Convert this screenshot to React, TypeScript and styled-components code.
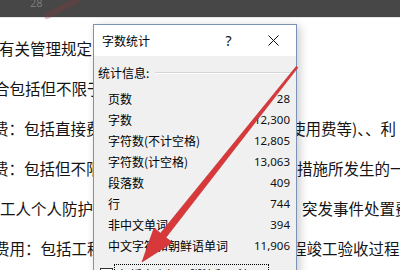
import React from 'react';
import styled, { createGlobalStyle } from 'styled-components';

const GlobalStyle = createGlobalStyle`
  html, body {
    margin: 0;
    padding: 0;
    background: #fff;
  }
  body {
    width: 400px;
    height: 270px;
    overflow: hidden;
    font-family: "Noto Sans CJK SC", "Noto Sans", sans-serif;
  }
`;

const Screen = styled.div`
  position: relative;
  width: 400px;
  height: 270px;
  overflow: hidden;
  display: flex;
  flex-direction: column;
  background: #fff;
`;

const TopBar = styled.div`
  flex: none;
  height: 17px;
  background: #474747;
  border-bottom: 1px solid #e4e4e4;
  padding-left: 30px;
  overflow: hidden;
`;

const PageNum = styled.div`
  margin-top: -3px;
  font-family: "Noto Sans", sans-serif;
  font-size: 11px;
  line-height: 11px;
  color: #7a7a7a;
`;

const Doc = styled.div`
  flex: 1;
  min-height: 0;
  display: grid;
  grid-template-columns: 93px 204px 1fr;
`;

const TextColumn = styled.div`
  padding-top: 10px;
  overflow: hidden;
`;

const TextLine = styled.div<{ $shift?: number }>`
  height: 40px;
  line-height: 40px;
  margin-left: ${(p) => p.$shift ?? 0}px;
  white-space: nowrap;
  font-size: 15.5px;
  color: #141414;
`;

const Dialog = styled.div`
  align-self: start;
  margin-top: 6px;
  height: 260px;
  box-sizing: border-box;
  border: 1px solid #7a92b4;
  background: #f0f0f0;
  box-shadow: 3px 2px 9px rgba(0, 0, 0, 0.2);
  display: flex;
  flex-direction: column;
`;

const TitleBar = styled.div`
  height: 31px;
  flex: none;
  display: flex;
  align-items: center;
  background: #fff;
`;

const Title = styled.div`
  flex: 1;
  padding-left: 8px;
  font-size: 12px;
  color: #000;
`;

const CaptionButton = styled.div`
  width: 45px;
  height: 31px;
  display: flex;
  align-items: center;
  justify-content: center;
  font-family: "Noto Sans", sans-serif;
  font-size: 14px;
  color: #111;
`;

const Body = styled.div`
  flex: 1;
  padding: 8px 6px 0 4px;
`;

const Header = styled.div`
  display: flex;
  align-items: center;
  font-size: 12px;
  line-height: 18px;
  color: #000;
`;

const Rule = styled.div`
  flex: 1;
  height: 0;
  margin: 0 -5px 0 6px;
  border-top: 1px solid #d6d6d6;
  border-bottom: 1px solid #fff;
`;

const StatList = styled.div`
  margin-top: 6px;
`;

const StatRow = styled.div`
  display: flex;
  justify-content: space-between;
  height: 21px;
  line-height: 21px;
  padding-left: 10px;
  font-size: 12px;
  color: #000;
`;

const Value = styled.span`
  font-family: "Noto Sans", sans-serif;
  font-size: 11.5px;
  color: #111;
`;

const CheckRow = styled.div`
  display: flex;
  align-items: flex-start;
  margin-top: 8px;
  padding-left: 2px;
`;

const Box = styled.div`
  width: 11px;
  height: 11px;
  margin-top: 4px;
  border: 1px solid #333;
  background: #fff;
`;

const FocusLabel = styled.div`
  margin-left: 1px;
  padding: 2px 3px;
  border: 1px dotted #000;
  font-size: 12px;
  line-height: 16px;
  white-space: nowrap;
`;

const Overlay = styled.svg`
  position: absolute;
  left: 0;
  top: 0;
  width: 400px;
  height: 270px;
  pointer-events: none;
`;

const leftLines: [string, number][] = [
  ['有关管理规定', -1],
  ['合包括但不限于', -6],
  ['费：包括直接费', -7],
  ['费：包括但不限', -7],
  ['工人个人防护', 0],
  ['费用：包括工程', -6],
];

const rightLines: [string, number][] = [
  ['', 0],
  ['', 0],
  ['使用费等)、、利', -7],
  ['措施所发生的一', 0],
  [' 突发事件处置费', 5],
  ['程竣工验收过程', -6],
];

const stats: [string, string][] = [
  ['页数', '28'],
  ['字数', '12,300'],
  ['字符数(不计空格)', '12,805'],
  ['字符数(计空格)', '13,063'],
  ['段落数', '409'],
  ['行', '744'],
  ['非中文单词', '394'],
  ['中文字符和朝鲜语单词', '11,906'],
];

const App = () => {
  return (
    <Screen>
      <GlobalStyle />
      <TopBar>
        <PageNum>28</PageNum>
      </TopBar>
      <Doc>
        <TextColumn>
          {leftLines.map(([t, s], i) => (
            <TextLine key={i} $shift={s}>
              {t}
            </TextLine>
          ))}
        </TextColumn>
        <Dialog>
          <TitleBar>
            <Title>字数统计</Title>
            <CaptionButton>?</CaptionButton>
            <CaptionButton>
              <svg width="11" height="11" viewBox="0 0 11 11">
                <path d="M0.5 0.5 L10.5 10.5 M10.5 0.5 L0.5 10.5" stroke="#111" strokeWidth="1" />
              </svg>
            </CaptionButton>
          </TitleBar>
          <Body>
            <Header>
              <span>统计信息:</span>
              <Rule />
            </Header>
            <StatList>
              {stats.map(([label, value]) => (
                <StatRow key={label}>
                  <span>{label}</span>
                  <Value>{value}</Value>
                </StatRow>
              ))}
            </StatList>
            <CheckRow>
              <Box />
              <FocusLabel>包括文本框、脚注和尾注(F)</FocusLabel>
            </CheckRow>
          </Body>
        </Dialog>
        <TextColumn>
          {rightLines.map(([t, s], i) => (
            <TextLine key={i} $shift={s}>
              {t || '\u00a0'}
            </TextLine>
          ))}
        </TextColumn>
      </Doc>
      <Overlay viewBox="0 0 400 270">
        {/* faint arrow left over in the top bar */}
        <path d="M77 0 L47 16" stroke="rgba(140,60,60,0.3)" strokeWidth="6" strokeLinecap="round" />
        {/* the big red pointer */}
        <polygon
          points="296.2,66.4 297.8,67.6 165.9,237.6 172.5,242.6 142,262 154,228 160.5,233.2"
          fill="#d8383a"
          stroke="#b8282c"
          strokeWidth="0.6"
          strokeLinejoin="round"
        />
      </Overlay>
    </Screen>
  );
};

export default App;
